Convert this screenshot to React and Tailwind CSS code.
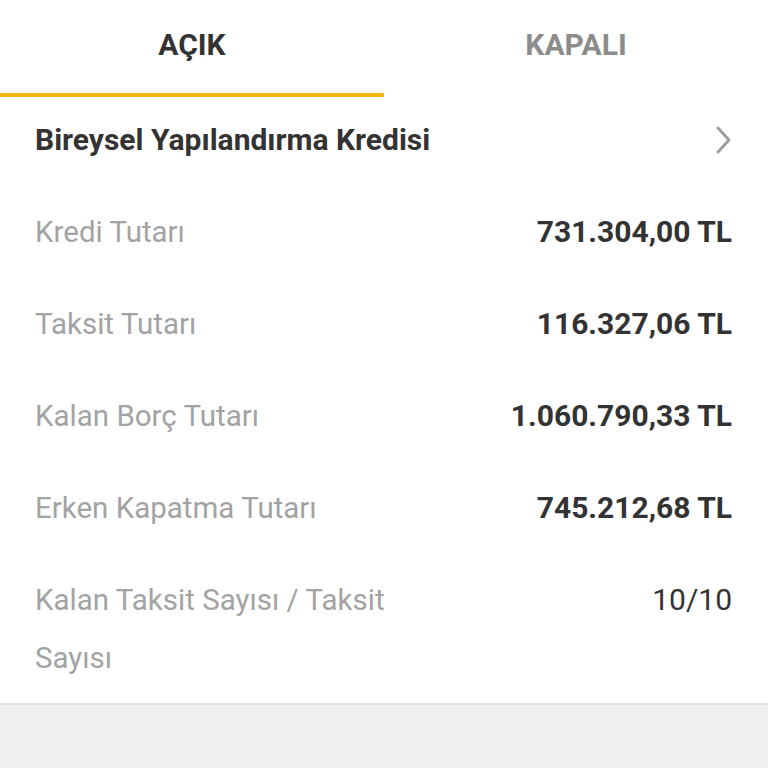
import { useState } from 'react'

const rows = [
  { label: 'Kredi Tutarı', value: '731.304,00 TL' },
  { label: 'Taksit Tutarı', value: '116.327,06 TL' },
  { label: 'Kalan Borç Tutarı', value: '1.060.790,33 TL' },
  { label: 'Erken Kapatma Tutarı', value: '745.212,68 TL' },
]

export default function App() {
  const [tab, setTab] = useState('open') // 'open' | 'closed'

  return (
    <div className="min-h-screen flex flex-col bg-[#f0efee] font-[Roboto,sans-serif]">
      <div className="bg-white">
        {/* sekmeler */}
        <div className="flex h-[97px]">
          <button
            onClick={() => setTab('open')}
            className={`flex-1 flex items-start justify-center pt-[25px] text-[30px] leading-[40px] font-bold border-b-4 ${tab === 'open' ? 'text-[#333] border-[#f6b40e]' : 'text-[#8c8c8c] border-transparent'}`}
          >
            AÇIK
          </button>
          <button
            onClick={() => setTab('closed')}
            className={`flex-1 flex items-start justify-center pt-[25px] text-[30px] leading-[40px] font-bold border-b-4 ${tab === 'closed' ? 'text-[#333] border-[#f6b40e]' : 'text-[#8c8c8c] border-transparent'}`}
          >
            KAPALI
          </button>
        </div>

        <div className="pl-[35px] pr-[36px]">
          <div className="flex items-center justify-between h-[89px] pb-1">
            <span className="text-[30px] font-bold text-[#333]">Bireysel Yapılandırma Kredisi</span>
            <svg width="20" height="30" viewBox="0 0 20 30" className="mr-[-2px]">
              <path d="M4 3 L15 15 L4 27" fill="none" stroke="#9e9e9e" strokeWidth="3" strokeLinecap="round" strokeLinejoin="round" />
            </svg>
          </div>

          {rows.map((r) => (
            <div key={r.label} className="flex items-center justify-between py-[17px] leading-[58px]">
              <span className="text-[29.5px] text-[#a3a3a3]">{r.label}</span>
              <span className="text-[30px] font-bold text-[#333]">{r.value}</span>
            </div>
          ))}

          <div className="flex items-start justify-between gap-6 pt-[17px] pb-[16px] leading-[58px]">
            <span className="text-[29.5px] text-[#a3a3a3] max-w-[380px]">Kalan Taksit Sayısı / Taksit Sayısı</span>
            <span className="text-[30px] text-[#333]">10/10</span>
          </div>
        </div>
      </div>
      <div className="border-t-2 border-[#e3e3e3]" />
    </div>
  )
}
